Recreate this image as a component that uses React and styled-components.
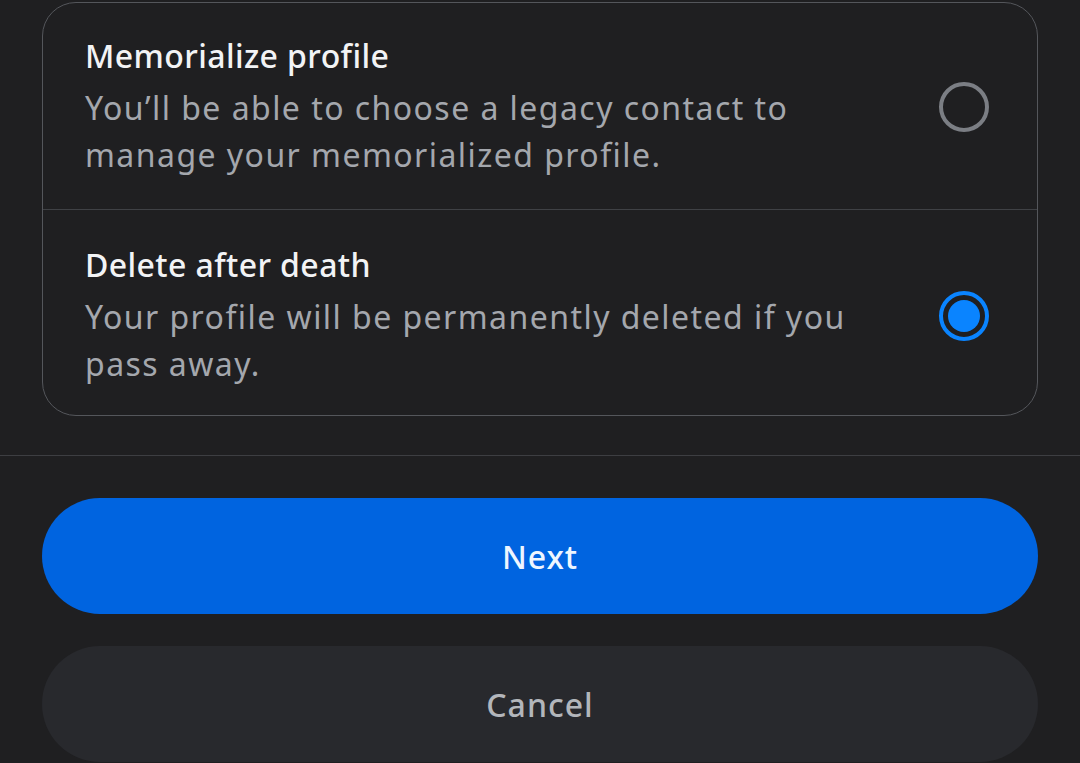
import React, { useState } from 'react';
import styled, { createGlobalStyle } from 'styled-components';

const GlobalStyle = createGlobalStyle`
  html, body {
    margin: 0;
    padding: 0;
    background: #1f1f21;
  }
  body {
    font-family: "Noto Sans", "Open Sans", "Liberation Sans", sans-serif;
    -webkit-font-smoothing: antialiased;
  }
`;

const Page = styled.div`
  width: 1080px;
  height: 763px;
  overflow: hidden;
  background: #1f1f21;
  display: flex;
  flex-direction: column;
`;

const CardWrap = styled.div`
  padding: 2px 42px 39px;
`;

const Card = styled.div`
  border: 1.5px solid #54565b;
  border-radius: 34px;
  overflow: hidden;
`;

const OptionRow = styled.div`
  display: flex;
  align-items: center;
  padding: ${(p) => (p.$first ? '33px 48px 31px 42px' : '35px 48px 28px 42px')};
  border-top: ${(p) => (p.$first ? 'none' : '1px solid #3f4145')};
  cursor: pointer;
`;

const OptionText = styled.div`
  flex: 1;
`;

const TextCol = styled.div`
  width: 800px;
`;

const Title = styled.div`
  color: #f2f3f5;
  font-size: 32px;
  font-weight: 500;
  letter-spacing: 0.4px;
  line-height: 40px;
  margin-bottom: 8px;
`;

const Desc = styled.div`
  color: #a4a7ad;
  font-size: 32px;
  letter-spacing: 1.45px;
  line-height: 47px;
`;

const Radio = styled.div`
  width: 50px;
  height: 50px;
  flex: none;
  box-sizing: border-box;
  border-radius: 50%;
  border: 4px solid ${(p) => (p.$on ? '#0a84ff' : '#7b7e84')};
  display: flex;
  align-items: center;
  justify-content: center;
`;

const Dot = styled.div`
  width: 32px;
  height: 32px;
  border-radius: 50%;
  background: #0a84ff;
`;

const Divider = styled.div`
  height: 1px;
  background: #3d3e42;
`;

const Actions = styled.div`
  display: flex;
  flex-direction: column;
  gap: 32px;
  padding: 42px 42px 0;
`;

const Button = styled.button`
  height: 116px;
  border: none;
  border-radius: 58px;
  font-family: inherit;
  font-size: 32px;
  font-weight: 500;
  letter-spacing: 1px;
  background: ${(p) => (p.$primary ? '#0064e0' : '#28292d')};
  color: ${(p) => (p.$primary ? '#eef6ff' : '#b3b6bb')};
  cursor: pointer;
`;

const options = [
  {
    id: 'memorialize',
    title: 'Memorialize profile',
    desc: 'You\u2019ll be able to choose a legacy contact to manage your memorialized profile.',
  },
  {
    id: 'delete',
    title: 'Delete after death',
    desc: 'Your profile will be permanently deleted if you pass away.',
  },
];

export default function App() {
  const [picked, setPicked] = useState('delete');

  return (
    <>
      <GlobalStyle />
      <Page>
        <CardWrap>
          <Card>
            {options.map((o, i) => (
              <OptionRow key={o.id} $first={i === 0} onClick={() => setPicked(o.id)}>
                <OptionText>
                  <TextCol>
                    <Title>{o.title}</Title>
                    <Desc>{o.desc}</Desc>
                  </TextCol>
                </OptionText>
                <Radio $on={picked === o.id}>{picked === o.id && <Dot />}</Radio>
              </OptionRow>
            ))}
          </Card>
        </CardWrap>
        <Divider />
        <Actions>
          <Button $primary>Next</Button>
          <Button>Cancel</Button>
        </Actions>
      </Page>
    </>
  );
}
